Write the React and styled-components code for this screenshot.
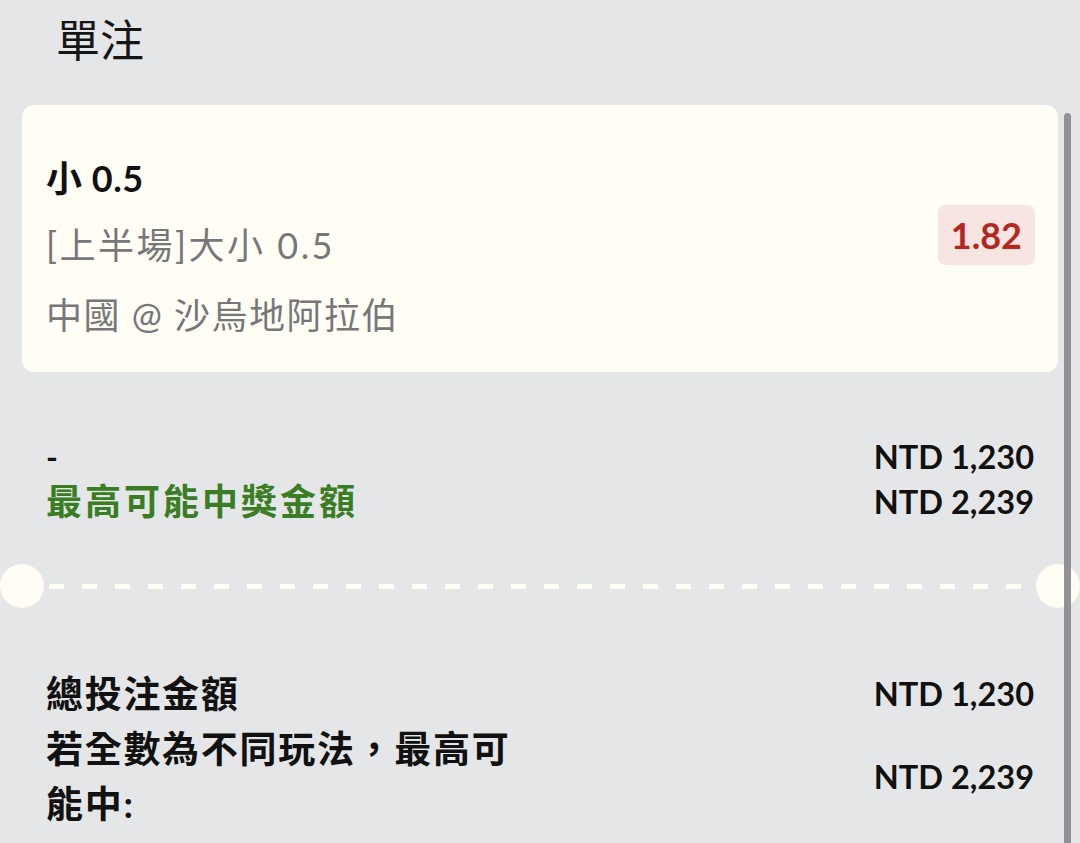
import React from "react";
import styled, { createGlobalStyle } from "styled-components";

const bet = {
  pick: "小 0.5",
  market: "[上半場]大小 0.5",
  match: "中國 @ 沙烏地阿拉伯",
  odds: "1.82",
  stake: "NTD 1,230",
  payout: "NTD 2,239",
};

function App() {
  return (
    <>
      <GlobalStyle />
      <Page>
        <Title>單注</Title>
        <Card>
          <Info>
            <Pick>{bet.pick}</Pick>
            <Market>{bet.market}</Market>
            <Match>{bet.match}</Match>
          </Info>
          <Odds>{bet.odds}</Odds>
        </Card>

        <Row>
          <Labels>
            <Line>-</Line>
            <Line $green>最高可能中獎金額</Line>
          </Labels>
          <Values>
            <Value>{bet.stake}</Value>
            <Value>{bet.payout}</Value>
          </Values>
        </Row>

        <Divider>
          <Notch />
          <Dashes />
          <Notch />
        </Divider>

        <Summary>
          <SummaryRow>
            <Label>總投注金額</Label>
            <Value>{bet.stake}</Value>
          </SummaryRow>
          <SummaryRow>
            <Label>若全數為不同玩法，最高可能中:</Label>
            <Value>{bet.payout}</Value>
          </SummaryRow>
        </Summary>

        <Scrollbar />
      </Page>
    </>
  );
}

const GlobalStyle = createGlobalStyle`
  html, body {
    margin: 0;
    background: #e5e6e8;
  }
  body {
    font-family: "Lato", "Noto Sans CJK TC", sans-serif;
    color: #111;
    overflow: hidden;
  }
`;

const Page = styled.div`
  position: relative;
  min-height: 843px;
`;

const Title = styled.h1`
  margin: 0 0 25px;
  padding: 0 56px;
  height: 80px;
  line-height: 80px;
  font-size: 44px;
  font-weight: 400;
  color: #161616;
`;

const Card = styled.div`
  margin: 0 22px;
  height: 267px;
  box-sizing: border-box;
  padding: 40px 23px 0 24px;
  background: #fffdf4;
  border-radius: 12px;
  display: flex;
  justify-content: space-between;
  align-items: flex-start;
`;

const Info = styled.div`
  display: flex;
  flex-direction: column;
`;

const Pick = styled.div`
  height: 66px;
  line-height: 66px;
  font-size: 36px;
  font-weight: 700;
  letter-spacing: 0.5px;
  color: #111;
`;

const Market = styled.div`
  height: 68px;
  line-height: 68px;
  font-size: 36px;
  letter-spacing: 2.5px;
  color: #77777a;
`;

const Match = styled.div`
  height: 72px;
  line-height: 72px;
  font-size: 36px;
  letter-spacing: 1.5px;
  color: #77777a;
`;

const Odds = styled.div`
  margin-top: 60px;
  height: 60px;
  padding: 0 13px;
  line-height: 60px;
  border-radius: 8px;
  background: #f8e4e0;
  color: #b3271f;
  font-size: 36px;
  font-weight: 700;
`;

const Row = styled.div`
  margin-top: 62px;
  padding: 0 46px;
  display: flex;
  justify-content: space-between;
`;

const Labels = styled.div`
  display: flex;
  flex-direction: column;
`;

const Line = styled.div`
  line-height: 45px;
  font-size: ${(p) => (p.$green ? "36px" : "32px")};
  font-weight: 700;
  letter-spacing: ${(p) => (p.$green ? "3px" : "0")};
  color: ${(p) => (p.$green ? "#3b7d24" : "#111")};
`;

const Values = styled.div`
  display: flex;
  flex-direction: column;
  align-items: flex-end;
`;

const Value = styled.div`
  line-height: 45px;
  font-size: 32.5px;
  font-weight: 700;
  white-space: nowrap;
  color: #111;
`;

const Divider = styled.div`
  margin-top: 40px;
  height: 44px;
  display: flex;
  align-items: center;
`;

const Notch = styled.div`
  width: 44px;
  height: 44px;
  border-radius: 50%;
  background: #fffdf4;
  flex-shrink: 0;
`;

const Dashes = styled.div`
  flex: 1;
  height: 5px;
  margin: 0 4px 0 5px;
  background: repeating-linear-gradient(
    to right,
    #fffdf4 0 15px,
    transparent 15px 33px
  );
`;

const Summary = styled.div`
  margin-top: 58px;
  padding: 0 46px;
  display: flex;
  flex-direction: column;
`;

const SummaryRow = styled.div`
  display: flex;
  justify-content: space-between;
  align-items: center;
`;

const Label = styled.div`
  max-width: 480px;
  line-height: 55px;
  font-size: 37px;
  font-weight: 700;
  letter-spacing: 1.7px;
  color: #111;
`;

const Scrollbar = styled.div`
  position: absolute;
  top: 113px;
  right: 9px;
  width: 7px;
  height: 760px;
  border-radius: 4px;
  background: #929296;
`;

export default App;
